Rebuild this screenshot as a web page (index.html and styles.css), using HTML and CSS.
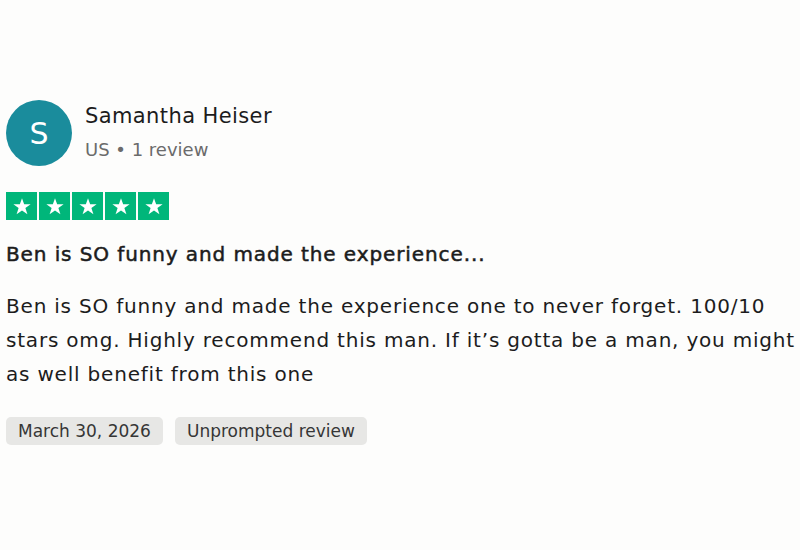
FILE: index.html
```html
<!DOCTYPE html>
<html lang="en">
<head>
    <meta charset="UTF-8">
    <title>Review</title>
    <link rel="stylesheet" href="styles.css">
</head>
<body>
    <div class="review">
        <div class="reviewer">
            <div class="avatar">S</div>
            <div class="reviewer-info">
                <div class="name">Samantha Heiser</div>
                <div class="meta">US &bull; 1 review</div>
            </div>
        </div>

        <div class="stars">
            <span class="star"><svg viewBox="0 0 24 24"><path d="M12 3.5l2.35 6.6h7.05l-5.7 4.1 2.2 6.8L12 16.8 6.1 21l2.2-6.8-5.7-4.1h7.05z"/></svg></span>
            <span class="star"><svg viewBox="0 0 24 24"><path d="M12 3.5l2.35 6.6h7.05l-5.7 4.1 2.2 6.8L12 16.8 6.1 21l2.2-6.8-5.7-4.1h7.05z"/></svg></span>
            <span class="star"><svg viewBox="0 0 24 24"><path d="M12 3.5l2.35 6.6h7.05l-5.7 4.1 2.2 6.8L12 16.8 6.1 21l2.2-6.8-5.7-4.1h7.05z"/></svg></span>
            <span class="star"><svg viewBox="0 0 24 24"><path d="M12 3.5l2.35 6.6h7.05l-5.7 4.1 2.2 6.8L12 16.8 6.1 21l2.2-6.8-5.7-4.1h7.05z"/></svg></span>
            <span class="star"><svg viewBox="0 0 24 24"><path d="M12 3.5l2.35 6.6h7.05l-5.7 4.1 2.2 6.8L12 16.8 6.1 21l2.2-6.8-5.7-4.1h7.05z"/></svg></span>
        </div>

        <h2 class="title">Ben is SO funny and made the experience...</h2>
        <p class="text">Ben is SO funny and made the experience one to never forget. 100/10 stars omg. Highly recommend this man. If it&rsquo;s gotta be a man, you might as well benefit from this one</p>

        <div class="tags">
            <span class="tag">March 30, 2026</span>
            <span class="tag">Unprompted review</span>
        </div>
    </div>
</body>
</html>
```

FILE: styles.css
```css
body {
    margin: 0;
    background: #fdfdfc;
    font-family: "DejaVu Sans", sans-serif;
    color: #1c1c1c;
}
.review {
    width: 794px;
    padding: 99px 0 0 6px;
}
.reviewer {
    display: flex;
    align-items: center;
    gap: 13px;
}
.avatar {
    width: 66px;
    height: 66px;
    border-radius: 50%;
    background: #1a8c9c;
    color: #fff;
    font-size: 30px;
    display: flex;
    align-items: center;
    justify-content: center;
}
.name {
    font-size: 21px;
    letter-spacing: 0.4px;
    line-height: 34px;
}
.meta {
    font-size: 18px;
    line-height: 34px;
    color: #6b6b6b;
}
.stars {
    display: flex;
    gap: 2px;
    margin-top: 25px;
}
.star {
    width: 31px;
    height: 28px;
    background: #00b67a;
    display: flex;
    align-items: center;
    justify-content: center;
}
.star svg {
    width: 22px;
    height: 22px;
    fill: #fff;
}
.title {
    font-size: 20px;
    font-weight: normal;
    -webkit-text-stroke: 0.5px #1c1c1c;
    letter-spacing: 0.9px;
    line-height: 28px;
    margin: 20px 0 0;
}
.text {
    font-size: 20px;
    letter-spacing: 0.8px;
    line-height: 34px;
    margin: 21px 0 0;
}
.tags {
    display: flex;
    gap: 12px;
    margin-top: 26px;
}
.tag {
    background: #e7e7e5;
    border-radius: 5px;
    padding: 0 12px;
    font-size: 17px;
    line-height: 28px;
    color: #363636;
}
```
